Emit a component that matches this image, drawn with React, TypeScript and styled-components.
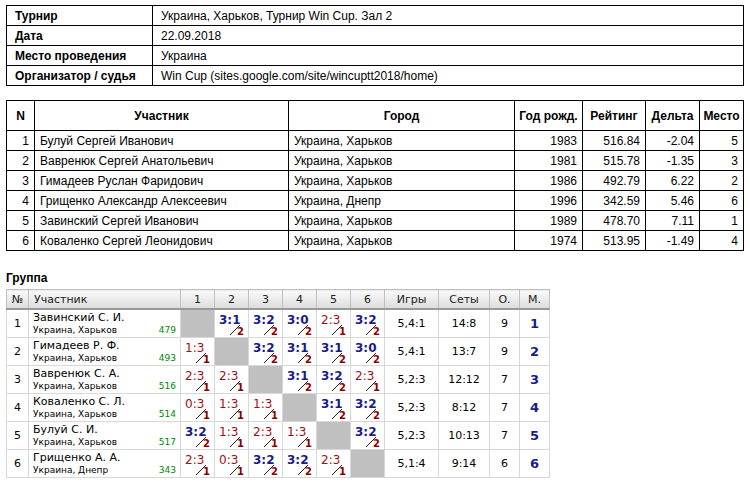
import React from 'react';
import styled, { createGlobalStyle } from 'styled-components';

const Global = createGlobalStyle`
  body { margin: 0; background: #fff; font-family: "Liberation Sans", Arial, sans-serif; font-size: 12px; color: #000; }
`;

const Page = styled.div`
  padding: 5px 6px;
  width: 738px;
`;

const Col = styled.col<{ $w?: number }>`
  width: ${({ $w }) => ($w ? `${$w}px` : 'auto')};
`;

const InfoTable = styled.table`
  border-collapse: collapse;
  width: 738px;
  td { border: 1px solid #000; height: 19px; padding: 0 8px; }
`;

const InfoKey = styled.td`
  font-weight: bold;
  width: 129px;
`;

const MainTable = styled.table`
  border-collapse: collapse;
  table-layout: fixed;
  width: 738px;
  margin-top: 14px;
  th { border: 1px solid #000; height: 29px; font-weight: bold; padding: 0 2px; white-space: nowrap; }
  td { border: 1px solid #000; height: 19px; padding: 0 5px; }
`;

const Cell = styled.td<{ $align?: string }>`
  text-align: ${({ $align }) => $align || 'left'};
`;

const Title = styled.div`
  font-weight: bold;
  margin: 20px 0 4px;
`;

const GroupTable = styled.table`
  border-collapse: collapse;
  table-layout: fixed;
  width: 544px;
  font-family: "DejaVu Sans", sans-serif;
  font-size: 11px;
  th {
    background: linear-gradient(#fafafa, #dcdcdc);
    border: 1px solid #c0c0c0;
    border-bottom: 2px solid #999;
    height: 18px;
    padding: 0;
    font-weight: normal;
    color: #222;
  }
  td { border: 1px solid #d8d8d8; height: 27px; padding: 0; text-align: center; }
`;

const NameHead = styled.th`
  text-align: left;
  padding-left: 5px !important;
`;

const Name = styled.td`
  text-align: left !important;
  padding: 0 4px !important;
`;

const NameTop = styled.div`
  font-size: 11px;
  line-height: 13px;
`;

const NameBottom = styled.div`
  display: flex;
  justify-content: space-between;
  font-size: 9px;
  line-height: 12px;
`;

const Rating = styled.span`
  color: #008800;
`;

const Grey = styled.td`
  background: #c0c0c0;
`;

const ScoreCell = styled.td`
  position: relative;
`;

const Score = styled.span<{ $win: boolean }>`
  position: absolute;
  left: 4px;
  top: 3px;
  font-size: 12px;
  color: ${({ $win }) => ($win ? '#1a1a8c' : '#a01010')};
  font-weight: ${({ $win }) => ($win ? 'bold' : 'normal')};
`;

const Pts = styled.span`
  position: absolute;
  right: 4px;
  bottom: 0;
  font-size: 10px;
  font-weight: bold;
  color: #8b0000;
`;

const SlashSvg = styled.svg`
  position: absolute;
  left: 0;
  top: 0;
`;

const Place = styled.td`
  color: #1a1a8c;
  font-weight: bold;
  font-size: 13px;
`;

const players = [
  ['1', 'Булуй Сергей Иванович', 'Украина, Харьков', '1983', '516.84', '-2.04', '5'],
  ['2', 'Вавренюк Сергей Анатольевич', 'Украина, Харьков', '1981', '515.78', '-1.35', '3'],
  ['3', 'Гимадеев Руслан Фаридович', 'Украина, Харьков', '1986', '492.79', '6.22', '2'],
  ['4', 'Грищенко Александр Алексеевич', 'Украина, Днепр', '1996', '342.59', '5.46', '6'],
  ['5', 'Завинский Сергей Иванович', 'Украина, Харьков', '1989', '478.70', '7.11', '1'],
  ['6', 'Коваленко Сергей Леонидович', 'Украина, Харьков', '1974', '513.95', '-1.49', '4'],
];

const group = [
  { n: 'Завинский С. И.', c: 'Украина, Харьков', r: '479', s: ['', '3:1', '3:2', '3:0', '2:3', '3:2'], g: '5,4:1', sets: '14:8', o: '9', m: '1' },
  { n: 'Гимадеев Р. Ф.', c: 'Украина, Харьков', r: '493', s: ['1:3', '', '3:2', '3:1', '3:1', '3:0'], g: '5,4:1', sets: '13:7', o: '9', m: '2' },
  { n: 'Вавренюк С. А.', c: 'Украина, Харьков', r: '516', s: ['2:3', '2:3', '', '3:1', '3:2', '2:3'], g: '5,2:3', sets: '12:12', o: '7', m: '3' },
  { n: 'Коваленко С. Л.', c: 'Украина, Харьков', r: '514', s: ['0:3', '1:3', '1:3', '', '3:1', '3:2'], g: '5,2:3', sets: '8:12', o: '7', m: '4' },
  { n: 'Булуй С. И.', c: 'Украина, Харьков', r: '517', s: ['3:2', '1:3', '2:3', '1:3', '', '3:2'], g: '5,2:3', sets: '10:13', o: '7', m: '5' },
  { n: 'Грищенко А. А.', c: 'Украина, Днепр', r: '343', s: ['2:3', '0:3', '3:2', '3:2', '2:3', ''], g: '5,1:4', sets: '9:14', o: '6', m: '6' },
];

const Slash = () => (
  <SlashSvg width="34" height="28">
    <line x1="15" y1="25" x2="25" y2="15" stroke="#222" strokeWidth="1" />
  </SlashSvg>
);

export default function App() {
  return (
    <Page>
      <Global />
      <InfoTable>
        <tbody>
          <tr><InfoKey>Турнир</InfoKey><td>Украина, Харьков, Турнир Win Cup. Зал 2</td></tr>
          <tr><InfoKey>Дата</InfoKey><td>22.09.2018</td></tr>
          <tr><InfoKey>Место проведения</InfoKey><td>Украина</td></tr>
          <tr><InfoKey>Организатор / судья</InfoKey><td>Win Cup (sites.google.com/site/wincuptt2018/home)</td></tr>
        </tbody>
      </InfoTable>
      <MainTable>
        <colgroup>
          <Col $w={28} /><Col $w={254} /><Col $w={226} /><Col $w={68} /><Col $w={63} /><Col $w={54} /><Col />
        </colgroup>
        <thead>
          <tr>
            <th>N</th><th>Участник</th><th>Город</th><th>Год рожд.</th><th>Рейтинг</th><th>Дельта</th><th>Место</th>
          </tr>
        </thead>
        <tbody>
          {players.map((p) => (
            <tr key={p[0]}>
              <Cell $align="right">{p[0]}</Cell>
              <Cell>{p[1]}</Cell>
              <Cell>{p[2]}</Cell>
              <Cell $align="right">{p[3]}</Cell>
              <Cell $align="right">{p[4]}</Cell>
              <Cell $align="right">{p[5]}</Cell>
              <Cell $align="right">{p[6]}</Cell>
            </tr>
          ))}
        </tbody>
      </MainTable>
      <Title>Группа</Title>
      <GroupTable>
        <colgroup>
          <Col $w={22} /><Col $w={152} />
          {[1, 2, 3, 4, 5, 6].map((i) => <Col key={i} $w={34} />)}
          <Col $w={54} /><Col $w={51} /><Col $w={30} /><Col />
        </colgroup>
        <thead>
          <tr>
            <th>№</th>
            <NameHead>Участник</NameHead>
            {[1, 2, 3, 4, 5, 6].map((i) => <th key={i}>{i}</th>)}
            <th>Игры</th><th>Сеты</th><th>О.</th><th>М.</th>
          </tr>
        </thead>
        <tbody>
          {group.map((g, i) => (
            <tr key={i}>
              <td>{i + 1}</td>
              <Name>
                <NameTop>{g.n}</NameTop>
                <NameBottom><span>{g.c}</span><Rating>{g.r}</Rating></NameBottom>
              </Name>
              {g.s.map((s, j) => {
                if (!s) return <Grey key={j} />;
                const win = s.startsWith('3');
                return (
                  <ScoreCell key={j}>
                    <Score $win={win}>{s}</Score>
                    <Slash />
                    <Pts>{win ? 2 : 1}</Pts>
                  </ScoreCell>
                );
              })}
              <td>{g.g}</td>
              <td>{g.sets}</td>
              <td>{g.o}</td>
              <Place>{g.m}</Place>
            </tr>
          ))}
        </tbody>
      </GroupTable>
    </Page>
  );
}
